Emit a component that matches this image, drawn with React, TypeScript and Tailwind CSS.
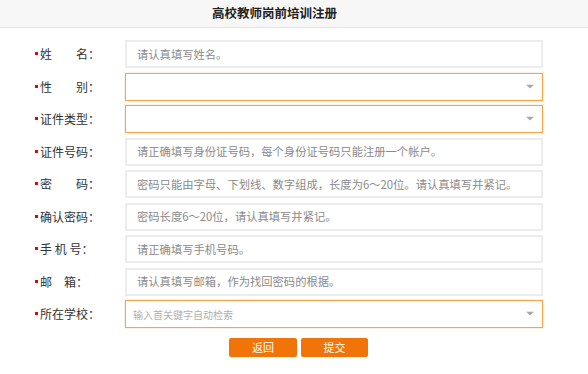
import React from "react";

const FONT = '"Noto Sans CJK SC", "Noto Sans", sans-serif';

type Row = {
  label: string;
  placeholder?: string;
  select?: boolean;
  small?: boolean;
};

const rows: Row[] = [
  { label: "姓　　名：", placeholder: "请认真填写姓名。" },
  { label: "性　　别：", select: true },
  { label: "证件类型：", select: true },
  { label: "证件号码：", placeholder: "请正确填写身份证号码，每个身份证号码只能注册一个帐户。" },
  { label: "密　　码：", placeholder: "密码只能由字母、下划线、数字组成，长度为6～20位。请认真填写并紧记。" },
  { label: "确认密码：", placeholder: "密码长度6～20位，请认真填写并紧记。" },
  { label: "手 机 号：", placeholder: "请正确填写手机号码。" },
  { label: "邮　箱：", placeholder: "请认真填写邮箱，作为找回密码的根据。" },
  { label: "所在学校：", placeholder: "输入首关键字自动检索", select: true, small: true },
];

function Arrow() {
  return (
    <svg width="8" height="5" viewBox="0 0 8 5" className="absolute right-[8px] top-1/2 -translate-y-1/2">
      <path d="M0 0 L8 0 L4 4 Z" fill="#a6a6a6" />
    </svg>
  );
}

export default function App() {
  return (
    <div className="w-[588px] h-[374px] bg-white overflow-hidden" style={{ fontFamily: FONT }}>
      <div className="h-[28px] bg-[#f7f7f7] border-b border-[#e3e3e3] flex items-center pl-[212px]">
        <span className="text-[12.5px] font-bold text-[#222]">高校教师岗前培训注册</span>
      </div>
      <div className="flex flex-col gap-[4.5px] pt-[12px]">
        {rows.map((r, i) => (
          <div key={i} className="flex items-center h-[28px]">
            <div className="w-[125px] pl-[35px] flex items-center text-[12px] text-[#333] leading-none">
              <span className="w-[3px] h-[3px] bg-[#e60012] mr-[2px] -mt-[1px]" />
              <span className="whitespace-pre">{r.label}</span>
            </div>
            <div
              className={
                "relative w-[418px] h-full flex items-center " +
                (r.select
                  ? "border border-[#f7a54a] shadow-[0_0_2px_rgba(247,165,74,0.45)]"
                  : "border-2 border-[#ececec]")
              }
            >
              {r.placeholder && (
                <span
                  className={
                    r.small
                      ? "pl-[7px] text-[10px] text-[#b0b0b0]"
                      : "pl-[10px] text-[11.3px] text-[#8a8a8a]"
                  }
                >
                  {r.placeholder}
                </span>
              )}
              {r.select && <Arrow />}
            </div>
          </div>
        ))}
      </div>
      <div className="flex gap-[4px] pl-[229px] mt-[10px]">
        <button className="w-[68px] h-[19px] rounded-[2px] bg-[#f07408] text-white text-[11px] leading-none">返回</button>
        <button className="w-[67px] h-[19px] rounded-[2px] bg-[#f07408] text-white text-[11px] leading-none">提交</button>
      </div>
    </div>
  );
}
